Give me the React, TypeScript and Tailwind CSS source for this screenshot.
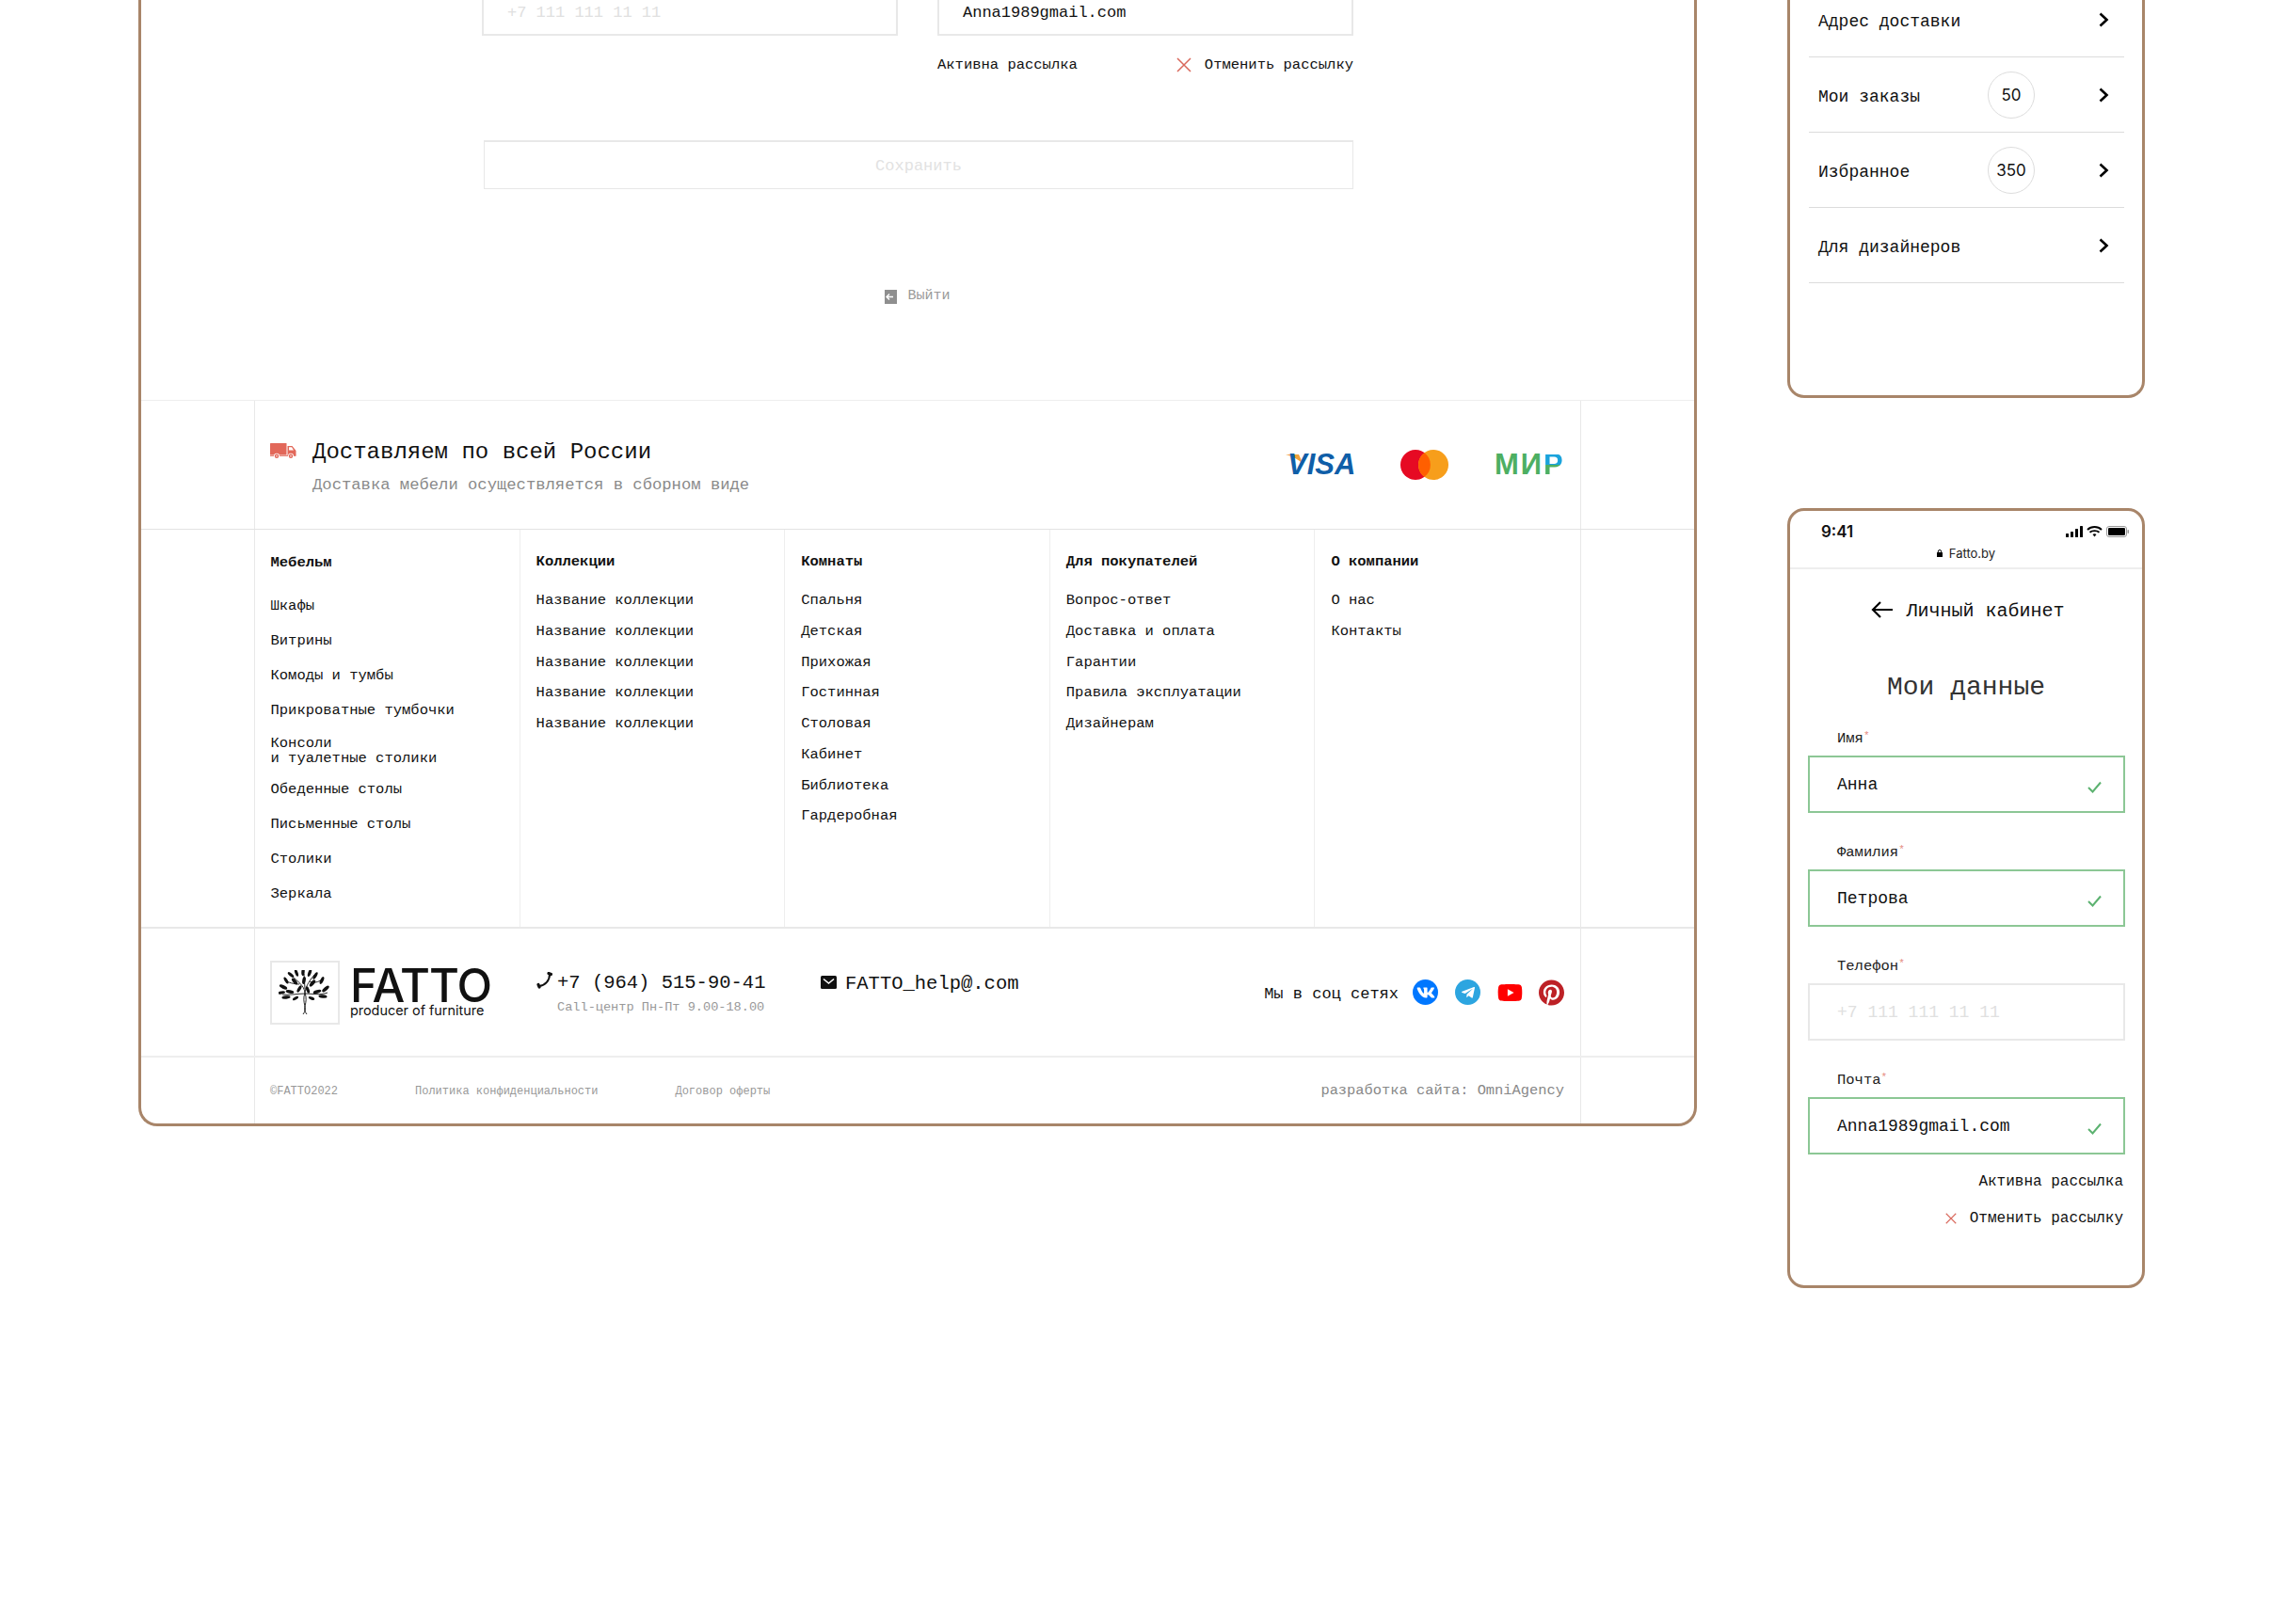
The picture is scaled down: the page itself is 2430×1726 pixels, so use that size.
import { FaPinterest, FaTelegramPlane, FaVk, FaYoutube } from "react-icons/fa";

const furniture = ["Шкафы", "Витрины", "Комоды и тумбы", "Прикроватные тумбочки"];
const furniture2 = ["Обеденные столы", "Письменные столы", "Столики", "Зеркала"];
const columns = [
  { title: "Коллекции", items: Array(5).fill("Название коллекции") as string[] },
  { title: "Комнаты", items: ["Спальня", "Детская", "Прихожая", "Гостинная", "Столовая", "Кабинет", "Библиотека", "Гардеробная"] },
  { title: "Для покупателей", items: ["Вопрос-ответ", "Доставка и оплата", "Гарантии", "Правила эксплуатации", "Дизайнерам"] },
  { title: "О компании", items: ["О нас", "Контакты"] },
];
const leaves = [
  [13, 5, 4, 1.6, 40], [19, 3, 4, 1.6, 70], [26, 2, 4.2, 1.7, 95], [33, 3, 4.2, 1.7, 110], [39, 6, 4.2, 1.7, 120],
  [8, 11, 4, 1.6, 60], [46, 11, 4.2, 1.7, 115], [3, 24, 4, 1.5, 170], [5, 18, 4.5, 1.8, 25], [50, 20, 4.6, 1.8, 140],
  [17, 12, 4.2, 1.8, 50], [27, 11, 4, 1.8, 100], [36, 14, 4.4, 1.9, 130], [12, 23, 4.4, 1.8, 10], [41, 23, 4.4, 1.8, 165],
  [22, 20, 4, 1.7, 120], [31, 21, 3.8, 1.7, 70], [8, 29, 4.6, 1.7, 175], [47, 28, 4.6, 1.8, 5], [18, 30, 3.4, 1.5, 150], [35, 30, 3.4, 1.5, 20],
];

function TreeLogo() {
  return (
    <svg viewBox="0 0 56 48" className="h-[48px] w-[56px]" fill="none">
      <path d="M26 47 C32 40 24 36 28 24 M30 47 C24 40 32 36 28 24 M28 24 C27 16 20 12 14 6 M28 24 C29 16 34 10 38 5 M28 25 C20 25 12 27 4 26 M28 25 C36 25 44 27 52 24 M28 20 L27 4 M22 15 C16 15 10 13 7 11 M33 12 C38 14 42 13 46 10" stroke="#111" strokeWidth="0.9" />
      {leaves.map(([x, y, rx, ry, r], i) => (
        <ellipse key={i} cx={x} cy={y} rx={rx} ry={ry} transform={`rotate(${r} ${x} ${y})`} fill="#111" />
      ))}
    </svg>
  );
}

function Truck() {
  return (
    <svg viewBox="0 0 28 17" className="h-[17px] w-[28px]" fill="#e2685a">
      <rect x="0" y="0" width="17.5" height="12.5" rx="0.5" />
      <path d="M18.5 3 H23.5 L27.5 8 V13 H18.5 Z M20 4.3 V7.6 H25 L23 4.3 Z" fillRule="evenodd" />
      <rect x="0" y="12.8" width="27.5" height="1" />
      <circle cx="7" cy="13.8" r="3" fill="#fff" />
      <circle cx="7" cy="13.8" r="2.2" />
      <circle cx="7" cy="13.8" r="0.8" fill="#fff" />
      <circle cx="22" cy="13.8" r="3" fill="#fff" />
      <circle cx="22" cy="13.8" r="2.2" />
      <circle cx="22" cy="13.8" r="0.8" fill="#fff" />
    </svg>
  );
}

function Cross({ size, width = 1.5 }: { size: number; width?: number }) {
  return (
    <svg viewBox="0 0 16 16" width={size} height={size} stroke="#d9695c" strokeWidth={width} fill="none">
      <path d="M1 1 L15 15 M15 1 L1 15" />
    </svg>
  );
}

function Tick() {
  return (
    <svg viewBox="0 0 15 13" className="mt-[6px] h-[13px] w-[15px]" fill="none" stroke="#5cb270" strokeWidth="2">
      <path d="M1 7 L5.5 11.5 L14 1.5" />
    </svg>
  );
}

function Chevron() {
  return (
    <svg viewBox="0 0 11 16" className="h-[16px] w-[11px] shrink-0" fill="none" stroke="#000" strokeWidth="2.6">
      <path d="M1.5 1.5 L8.5 8 L1.5 14.5" />
    </svg>
  );
}

function MenuRow({ label, count, first }: { label: string; count?: string; first?: boolean }) {
  return (
    <div className={`flex items-center border-b border-[#dcdcdc] pr-[16px] pl-[10px] ${first ? "h-[61px] pb-[18px]" : "h-[80px]"}`}>
      <span className="mt-[5px] flex-1 text-[18px] text-[#111]">{label}</span>
      {count && (
        <span className="mr-[68px] flex h-[50px] w-[50px] items-center justify-center rounded-full border border-[#dddddd] pt-[2px] font-['Inter',sans-serif] text-[17px] text-[#111]">
          {count}
        </span>
      )}
      <Chevron />
    </div>
  );
}

function Field({ label, value, placeholder }: { label: string; value?: string; placeholder?: string }) {
  return (
    <div>
      <div className="mb-[9px] h-[20px] pt-[1px] pl-[31px] text-[15.5px] leading-[20px] text-[#222]">
        {label}
        <span className="relative -top-[4px] text-[11px] text-[#e58a80]">*</span>
      </div>
      <div className={`flex h-[61px] items-center justify-between border-2 pr-[23px] pl-[29px] text-[18px] ${value ? "border-[#8cc795] text-[#111]" : "border-[#e8e8e8] text-[#e0e0e0]"}`}>
        <span className="pt-[2px]">{value ?? placeholder}</span>
        {value && <Tick />}
      </div>
    </div>
  );
}

export default function App() {
  return (
    <div className="flex h-[1726px] w-full items-start overflow-hidden bg-white pl-[147px] font-['Liberation_Mono',monospace] text-[#111]">
      {/* Desktop frame */}
      <div className="w-[1656px] rounded-b-[20px] border-x-[3px] border-b-[3px] border-[#a88569]">
        <div className="h-[425px] pl-[362px]">
          <div className="w-[926px]">
            <div className="grid grid-cols-[442px_442px] gap-x-[42px]">
              <div className="h-[38px] border-x-2 border-b-2 border-[#e8e8e8] pt-[2px] pl-[25px] text-[17px] leading-[24px] text-[#e0e0e0]">+7 111 111 11 11</div>
              <div className="h-[38px] border-x-2 border-b-2 border-[#e8e8e8] pt-[2px] pl-[25px] text-[17px] leading-[24px]">Anna1989gmail.com</div>
            </div>
            <div className="mt-[21px] ml-[484px] flex items-center justify-between text-[15.5px] leading-[20px]">
              <span>Активна рассылка</span>
              <span className="flex items-center gap-[14px]">
                <Cross size={16} />
                Отменить рассылку
              </span>
            </div>
            <div className="mt-[70px] ml-[2px] flex h-[52px] items-center justify-center border border-t-2 border-[#e8e8e8] pt-[3px] text-[17px] text-[#e2e2e2]">Сохранить</div>
            <div className="mt-[104px] flex items-center justify-center gap-[11px] text-[15px] leading-[20px] text-[#999]">
              <svg viewBox="0 0 13 15" className="h-[15px] w-[13px]">
                <rect width="13" height="15" fill="#8f8f8f" />
                <path d="M9 7.5 H2 M5 4.5 L2 7.5 L5 10.5" stroke="#fff" strokeWidth="1.4" fill="none" />
              </svg>
              Выйти
            </div>
          </div>
        </div>

        {/* Delivery */}
        <div className="flex h-[137px] border-t border-[#eeeeee] px-[120px]">
          <div className="flex flex-1 items-center justify-between border-x border-[#e8e8e8] pr-[17px] pl-[16px]">
            <div className="flex items-start gap-[17px] pt-[5px]">
              <div className="pt-[4px]">
                <Truck />
              </div>
              <div>
                <div className="text-[24px] leading-[28px] text-[#111]">Доставляем по всей России</div>
                <div className="mt-[10px] text-[17.2px] leading-[22px] text-[#8a8a8a]">Доставка мебели осуществляется в сборном виде</div>
              </div>
            </div>
            <div className="flex items-center">
              <div className="relative w-[73px] pl-[2px] font-['Liberation_Sans',sans-serif] text-[31px] leading-[22px] font-bold text-[#0f5ea8] italic">
                <svg viewBox="0 0 20 12" className="absolute top-0 left-0 h-[12px] w-[20px]">
                  <path d="M0 0 H14 L19 11 C14 5 7 2 0 0 Z" fill="#f0a23c" />
                </svg>
                <span className="relative">VISA</span>
              </div>
              <svg viewBox="0 0 51 32" className="ml-[49px] h-[32px] w-[51px]">
                <circle cx="16" cy="16" r="16" fill="#e60a23" />
                <circle cx="35" cy="16" r="16" fill="#f79e1b" />
                <path d="M25.5 3.2 A16 16 0 0 1 25.5 28.8 A16 16 0 0 1 25.5 3.2 Z" fill="#ff5f00" />
              </svg>
              <div className="ml-[49px] flex w-[74px] font-['Liberation_Sans',sans-serif] text-[31px] leading-[22px] font-bold tracking-[2px] text-[#4daf62]">
                МИ
                <span className="bg-[linear-gradient(180deg,#1aa3dc_52%,#4daf62_52%)] bg-clip-text text-transparent">Р</span>
              </div>
            </div>
          </div>
        </div>

        {/* Link columns */}
        <div className="flex h-[423px] border-t border-[#e3e3e3] px-[120px]">
          <div className="grid flex-1 grid-cols-5 border-x border-[#e8e8e8]">
            <div className="border-r border-[#eeeeee] pt-[27px] pl-[16.5px] text-[15.5px] leading-[16px]">
              <div className="font-bold">Мебельм</div>
              <div className="mt-[30px] flex flex-col gap-[21px]">
                {furniture.map((t) => (
                  <div key={t}>{t}</div>
                ))}
                <div className="-mt-[2px] -mb-[4px]">
                  Консоли
                  <br />и туалетные столики
                </div>
                {furniture2.map((t) => (
                  <div key={t}>{t}</div>
                ))}
              </div>
            </div>
            {columns.map((c, i) => (
              <div key={c.title} className={`pt-[26px] pl-[17px] text-[15.5px] leading-[16px] ${i < 3 ? "border-r border-[#eeeeee]" : ""}`}>
                <div className="font-bold">{c.title}</div>
                <div className="mt-[25px] flex flex-col gap-[16.75px]">
                  {c.items.map((t, j) => (
                    <div key={j}>{t}</div>
                  ))}
                </div>
              </div>
            ))}
          </div>
        </div>

        {/* Contacts */}
        <div className="flex h-[137px] border-t-2 border-[#e8e8e8] px-[120px]">
          <div className="flex flex-1 items-center border-x border-[#e8e8e8] pr-[17px] pl-[16px]">
            <div className="flex h-[68px] w-[74px] shrink-0 items-center justify-center border-2 border-[#e8e8e8]">
              <TreeLogo />
            </div>
            <div className="ml-[11px] w-[146px] font-['Inter',sans-serif] text-[#111]">
              <div className="text-[49px] leading-[38px] font-medium tracking-[-1px]">FATTO</div>
              <div className="text-[14.4px] leading-[14px] whitespace-nowrap">producer of furniture</div>
            </div>
            <div className="ml-[52px] w-[243px] pt-[2px]">
              <div className="flex items-center gap-[5px] text-[20.5px] leading-[24px] whitespace-nowrap">
                <svg viewBox="0 0 17 18" className="-mt-[6px] h-[18px] w-[17px] shrink-0" fill="none" stroke="#111" strokeLinecap="round">
                  <path d="M14 2.5 C14 9 9.5 14 3 15" strokeWidth="2" />
                  <path d="M13 1.5 L15.5 2.5 M2 13.5 L3 16" strokeWidth="3.2" />
                </svg>
                +7 (964) 515-90-41
              </div>
              <div className="mt-[6px] pl-[22px] text-[13.6px] leading-[16px] whitespace-nowrap text-[#999]">Call-центр Пн-Пт 9.00-18.00</div>
            </div>
            <div className="-mt-[18px] ml-[59px] flex items-center gap-[9px] text-[20.5px] leading-[24px]">
              <svg viewBox="0 0 17 14" className="-mt-[3px] h-[14px] w-[17px]">
                <rect width="17" height="14" rx="1.5" fill="#111" />
                <path d="M3 3.5 L8.5 8 L14 3.5" stroke="#fff" strokeWidth="1.6" fill="none" />
              </svg>
              FATTO_help@.com
            </div>
            <div className="ml-auto flex items-center">
              <span className="mt-[4px] mr-[15px] text-[17px]">Мы в соц сетях</span>
              <span className="flex h-[27px] w-[27px] items-center justify-center rounded-full bg-[#0077ff] text-white">
                <FaVk size={20} />
              </span>
              <span className="ml-[18px] flex h-[27px] w-[27px] items-center justify-center rounded-full bg-[#2ca5e0] text-white">
                <FaTelegramPlane size={16} />
              </span>
              <span className="ml-[18px] flex h-[27px] w-[27px] items-center justify-center text-[#ff0000]">
                <FaYoutube size={30} />
              </span>
              <span className="ml-[17px] flex h-[27px] w-[27px] items-center justify-center text-[#bd2126]">
                <FaPinterest size={28} />
              </span>
            </div>
          </div>
        </div>

        {/* Legal */}
        <div className="flex h-[72px] border-t-2 border-[#eeeeee] px-[120px]">
          <div className="flex flex-1 items-center gap-[82px] border-x border-[#e8e8e8] pt-[2px] pr-[17px] pl-[16px] text-[12px] text-[#999]">
            <span>©FATTO2022</span>
            <span>Политика конфиденциальности</span>
            <span>Договор оферты</span>
            <span className="ml-auto text-[15.4px] text-[#888]">разработка сайта: OmniAgency</span>
          </div>
        </div>
      </div>

      {/* Mobile frames */}
      <div className="ml-[96px] w-[380px]">
        <div className="h-[423px] rounded-b-[18px] border-x-[3px] border-b-[3px] border-[#a88569] pr-[19px] pl-[20px]">
          <MenuRow label="Адрес доставки" first />
          <MenuRow label="Мои заказы" count="50" />
          <MenuRow label="Избранное" count="350" />
          <MenuRow label="Для дизайнеров" />
        </div>

        <div className="mt-[117px] h-[829px] rounded-[18px] border-[3px] border-[#a88569]">
          <div className="h-[62px] border-b-2 border-[#eeeeee] font-['Inter',sans-serif]">
            <div className="flex items-center justify-between pt-[14px] pr-[14px] pl-[33px] text-[17px] leading-[16px] font-semibold">
              9:41
              <svg viewBox="0 0 67 12" className="h-[12px] w-[67px]">
                <rect x="0" y="8" width="3" height="4" rx="0.6" fill="#000" />
                <rect x="5" y="6" width="3" height="6" rx="0.6" fill="#000" />
                <rect x="10" y="3" width="3" height="9" rx="0.6" fill="#000" />
                <rect x="15" y="0" width="3" height="12" rx="0.6" fill="#000" />
                <path d="M23 4 C27 0 34 0 38 4 M25.5 6.8 C28 4.5 33 4.5 35.5 6.8" stroke="#000" strokeWidth="1.9" fill="none" />
                <path d="M28.5 9 C29.8 8 31.2 8 32.5 9 L30.5 11.5 Z" fill="#000" />
                <rect x="43.5" y="0.5" width="21" height="11" rx="2.5" fill="none" stroke="#999" />
                <rect x="45" y="2" width="18" height="8" rx="1.3" fill="#000" />
                <rect x="65.5" y="4" width="1.5" height="4" rx="0.7" fill="#999" />
              </svg>
            </div>
            <div className="mt-[7px] flex items-center justify-center gap-[7px] text-[13px] leading-[16px] text-[#222]">
              <svg viewBox="0 0 6 8" className="h-[8px] w-[6px]">
                <rect y="3" width="6" height="5" rx="0.6" fill="#000" />
                <path d="M1.3 3.5 V2.2 A1.7 1.7 0 0 1 4.7 2.2 V3.5" stroke="#000" fill="none" />
              </svg>
              Fatto.by
            </div>
          </div>

          <div className="mt-[29px] ml-[4px] flex h-[28px] items-center justify-center gap-[14px] text-[20px]">
            <svg viewBox="0 0 23 18" className="h-[18px] w-[23px]" fill="none" stroke="#000" strokeWidth="2.2">
              <path d="M23 9 H2 M10 1 L2 9 L10 17" />
            </svg>
            <span className="pt-[4px]">Личный кабинет</span>
          </div>
          <div className="mt-[51px] text-center text-[28px] leading-[36px] text-[#333]">Мои данные</div>

          <div className="mt-[25px] ml-[19px] flex w-[337px] flex-col gap-[31px]">
            <Field label="Имя" value="Анна" />
            <Field label="Фамилия" value="Петрова" />
            <Field label="Телефон" placeholder="+7 111 111 11 11" />
            <Field label="Почта" value="Anna1989gmail.com" />
          </div>

          <div className="mt-[19px] mr-[20px] text-right text-[16px] leading-[20px]">Активна рассылка</div>
          <div className="mt-[19px] mr-[20px] flex items-center justify-end gap-[14px] text-[16px] leading-[20px]">
            <Cross size={12} />
            Отменить рассылку
          </div>
        </div>
      </div>
    </div>
  );
}
